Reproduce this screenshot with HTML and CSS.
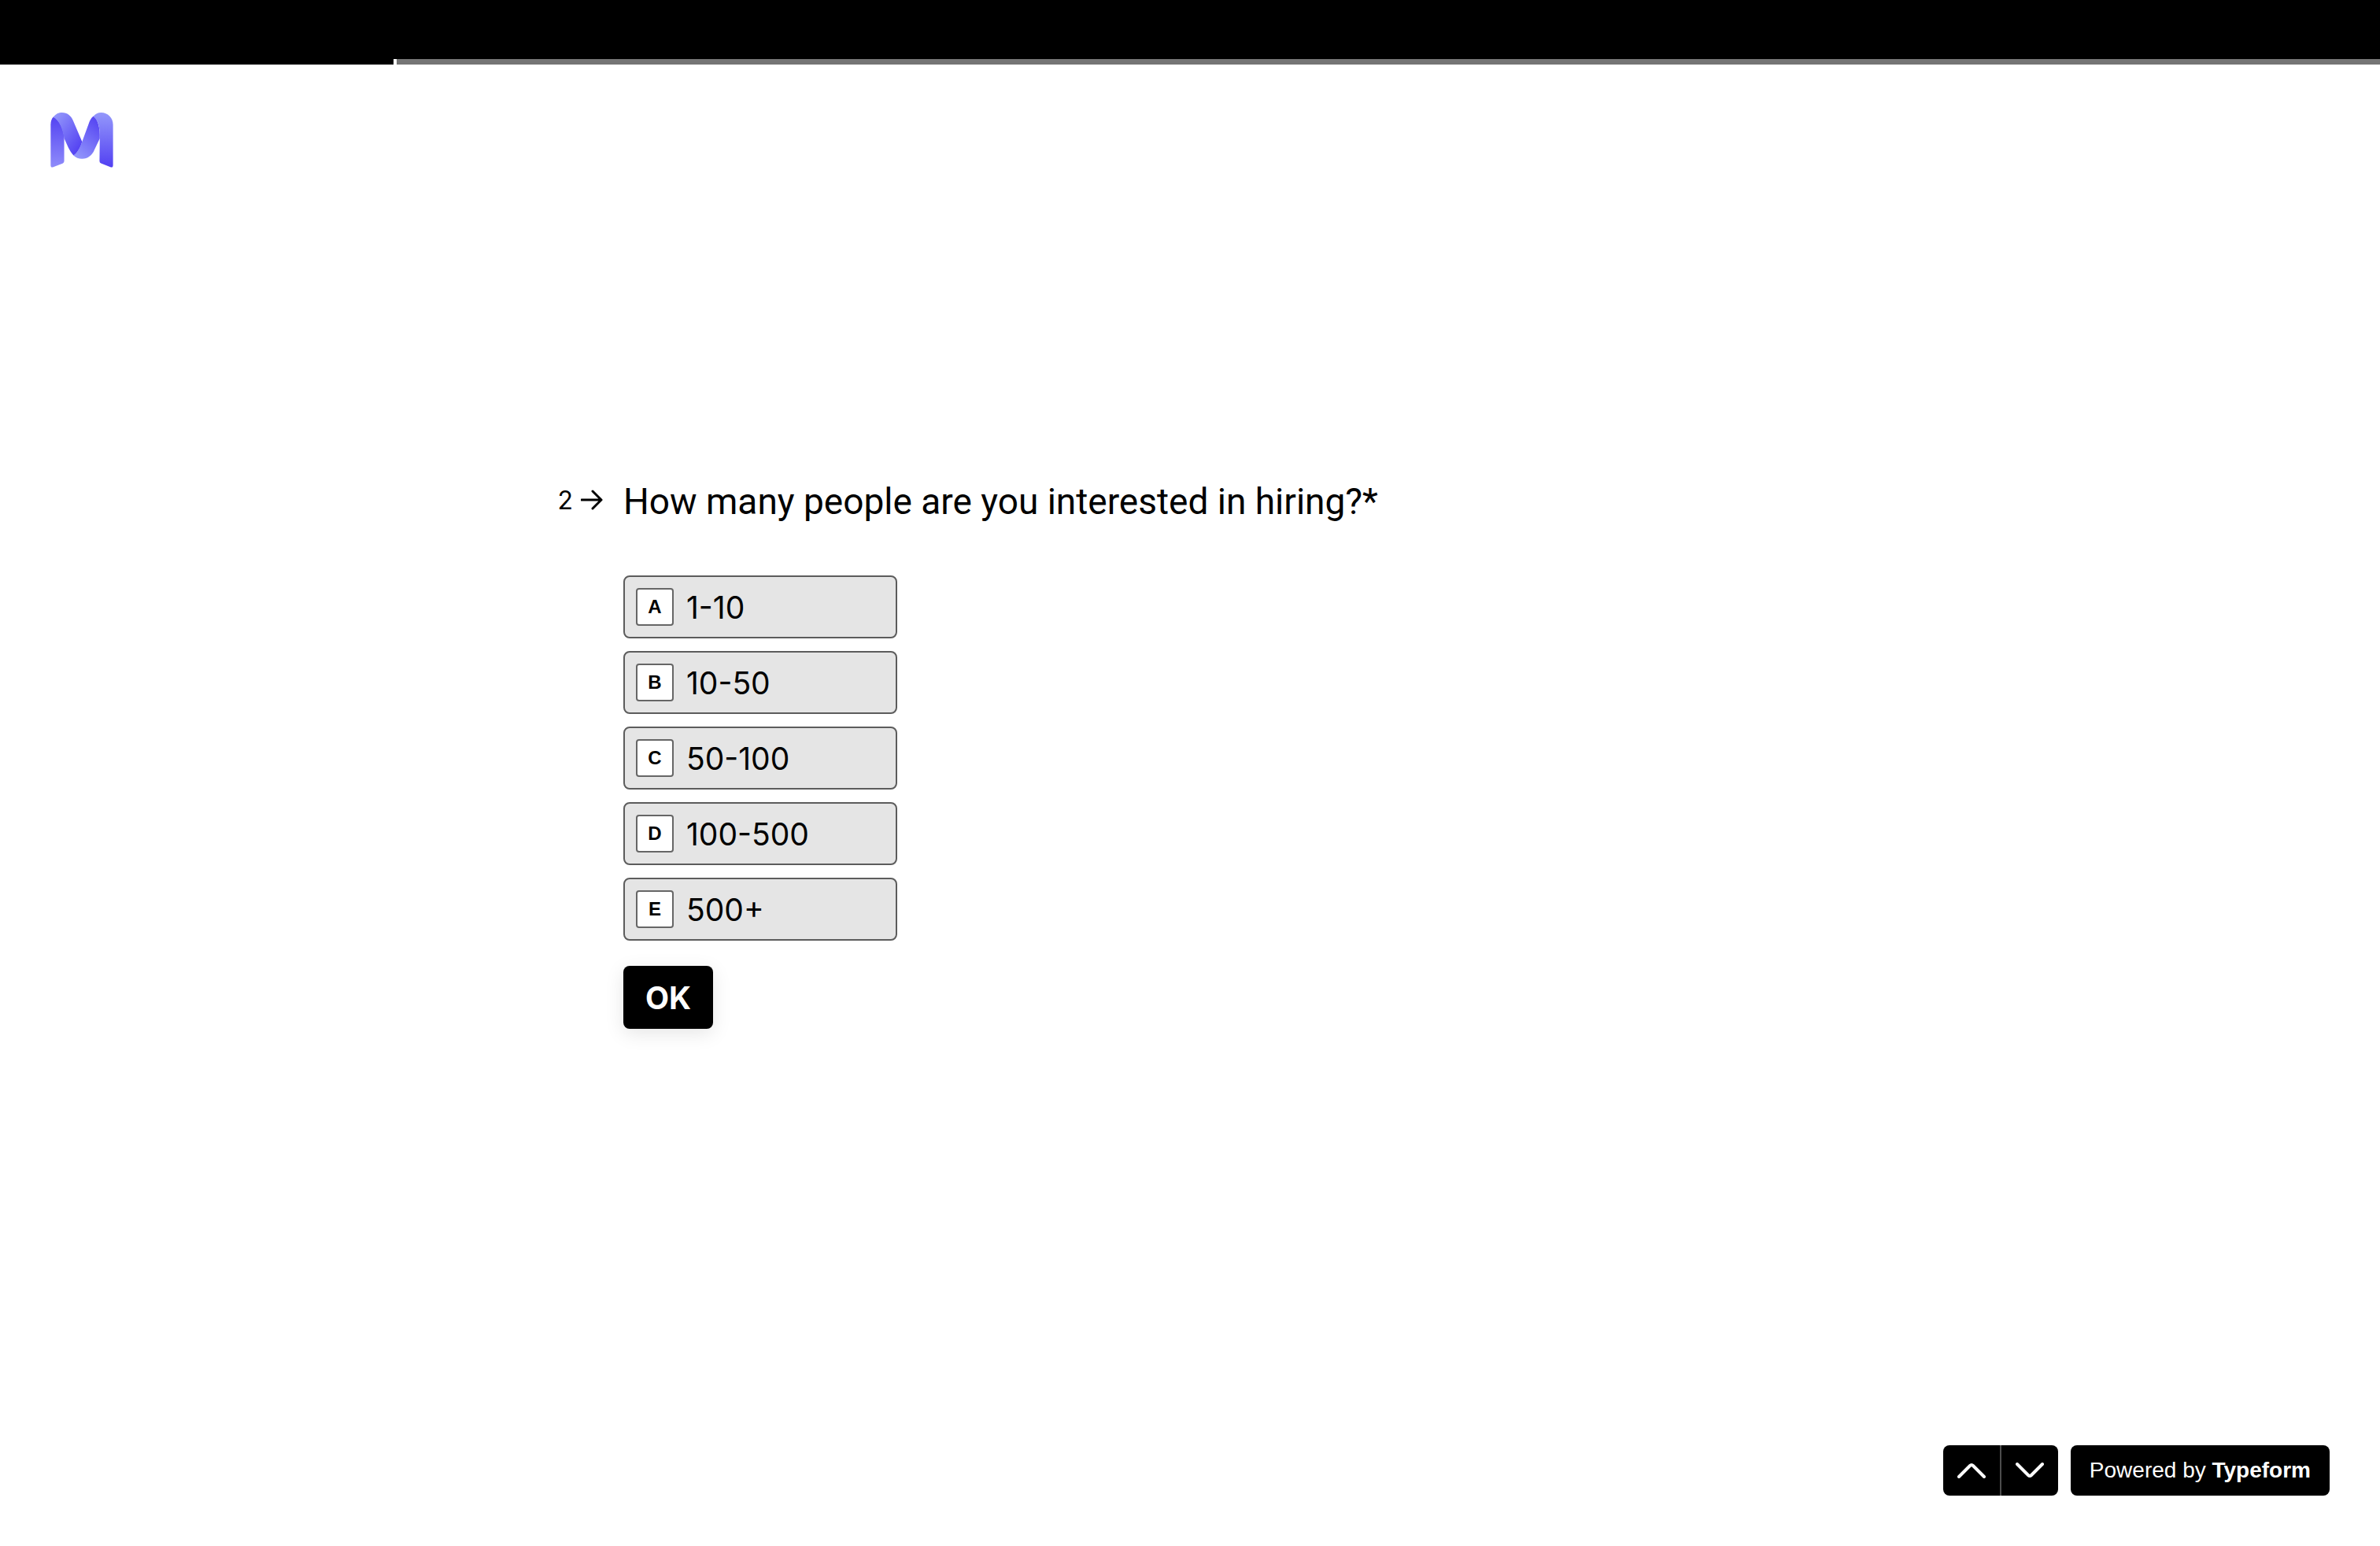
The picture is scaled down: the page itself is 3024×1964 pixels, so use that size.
FILE: index.html
```html
<!DOCTYPE html>
<html lang="en">
<head>
<meta charset="utf-8">
<meta name="viewport" content="width=device-width, initial-scale=1">
<title>Hiring survey</title>
<link rel="stylesheet" href="styles.css">
</head>
<body>
<div class="topbar"></div>
<div class="progress" role="progressbar" aria-label="Survey progress" aria-valuenow="17" aria-valuemin="0" aria-valuemax="100">
  <div class="progress-fill" style="width: 16.667%"></div>
</div>
<header class="header">
  <svg class="logo" viewBox="72 68 240 212" role="img" aria-label="Company logo">
    <defs>
      <linearGradient id="leg-left" x1="0" y1="0" x2="0" y2="1"><stop offset="0" stop-color="#5443f2"/><stop offset="1" stop-color="#8f8cfa"/></linearGradient>
      <linearGradient id="fold-left" x1="0.1" y1="0" x2="0.9" y2="0.9"><stop offset="0" stop-color="#9498fb"/><stop offset="1" stop-color="#5240f2"/></linearGradient>
      <linearGradient id="fold-right" x1="0.8" y1="0" x2="0.3" y2="1"><stop offset="0" stop-color="#5443f2"/><stop offset="1" stop-color="#9093fb"/></linearGradient>
      <linearGradient id="leg-right" x1="0" y1="0" x2="0" y2="1"><stop offset="0" stop-color="#9498fb"/><stop offset="1" stop-color="#5240f2"/></linearGradient>
    </defs>
    <path fill="url(#leg-left)" d="M72 114C72 102 76 91 83 84C107 96 124 140 124 167V254Q124 260 119 263L82 278Q72 281 72 270Z"/>
    <path fill="url(#fold-left)" d="M82 86C91 73 103 68 116 68C136 68 150 80 158 98L193 180C187 202 176 224 160 233C150 222 145 212 140 203L124 167C119 132 105 96 82 86Z"/>
    <path fill="url(#fold-right)" d="M160 233C176 222 186 200 193 180L218 112C222 100 228 88 237 82C254 94 263 130 261 168L240 212C232 232 215 246 193 246C180 246 168 241 160 233Z"/>
    <path fill="url(#leg-right)" d="M236 83C244 73 254 68 266 68C292 68 312 88 312 115V270Q312 281 302 278L266 263Q260 261 260 255L261 168C262 130 257 98 236 83Z"/>
  </svg>
</header>
<main class="main">
  <form class="question">
    <div class="number">
      <span>2</span>
      <svg class="arrow" viewBox="0 0 28 26" aria-hidden="true"><path d="M1 13H26M15 2L26 13L15 24"/></svg>
    </div>
    <div class="content">
      <h1 class="title" id="question-title">How many people are you interested in hiring?*</h1>
      <div class="options" role="radiogroup" aria-labelledby="question-title">
        <label class="option"><input type="radio" name="hires" value="1-10"><span class="key">A</span><span>1-10</span></label>
        <label class="option"><input type="radio" name="hires" value="10-50"><span class="key">B</span><span>10-50</span></label>
        <label class="option"><input type="radio" name="hires" value="50-100"><span class="key">C</span><span>50-100</span></label>
        <label class="option"><input type="radio" name="hires" value="100-500"><span class="key">D</span><span>100-500</span></label>
        <label class="option"><input type="radio" name="hires" value="500+"><span class="key">E</span><span>500+</span></label>
      </div>
      <button class="ok" type="button">OK</button>
    </div>
  </form>
</main>
<footer class="footer">
  <div class="nav">
    <button class="nav-button" type="button" aria-label="Previous question"><svg class="chevron" viewBox="0 0 36 20" aria-hidden="true"><path d="M2 18L16 4Q18 2 20 4L34 18"/></svg></button>
    <button class="nav-button" type="button" aria-label="Next question"><svg class="chevron" viewBox="0 0 36 20" aria-hidden="true"><path d="M2 2L16 16Q18 18 20 16L34 2"/></svg></button>
  </div>
  <a class="powered" href="#">Powered by <strong>Typeform</strong></a>
</footer>
</body>
</html>
```
FILE: styles.css
```css
* {
  box-sizing: border-box;
}

body {
  display: flex;
  flex-direction: column;
  min-height: 100vh;
  margin: 0;
  background: #fff;
  color: #000;
  font-family: Inter, "Liberation Sans", sans-serif;
}

button {
  border: 0;
  background: #000;
  color: #fff;
  font: inherit;
}

.topbar {
  height: 75px;
  background: #000;
}

.progress {
  height: 7px;
  background: #757575;
}

.progress-fill {
  height: 100%;
  border-right: 4px solid #fff;
  background: #000;
}

.header {
  padding: 61px 64px 0;
}

.logo {
  display: block;
  width: 80px;
  height: 70px;
}

.main {
  padding-top: 392px;
}

.question {
  display: grid;
  grid-template-columns: 1fr minmax(0, 1440px) 1fr;
}

.number {
  display: flex;
  align-items: center;
  justify-self: end;
  gap: 10px;
  height: 60px;
  padding-right: 26px;
  font-size: 32px;
}

.arrow {
  width: 28px;
  height: 26px;
  fill: none;
  stroke: #000;
  stroke-width: 3;
  stroke-linecap: round;
  stroke-linejoin: round;
}

.title {
  margin: 0;
  font-family: Roboto, "Liberation Sans", sans-serif;
  font-size: 46px;
  font-weight: 400;
  line-height: 64px;
}

.options {
  display: flex;
  flex-direction: column;
  align-items: flex-start;
  gap: 16px;
  margin: 62px 0 32px;
}

.option {
  position: relative;
  display: flex;
  align-items: center;
  gap: 16px;
  width: 348px;
  height: 80px;
  padding: 0 14px;
  border: 2px solid #5c5c5c;
  border-radius: 8px;
  background: #e5e5e5;
  font-size: 39px;
}

.option input {
  position: absolute;
  inset: 0;
  margin: 0;
  opacity: 0;
}

.key {
  display: grid;
  place-items: center;
  width: 48px;
  height: 48px;
  border: 2px solid #666;
  border-radius: 4px;
  background: #fff;
  font: 700 24px "Liberation Sans", sans-serif;
}

.ok {
  height: 80px;
  padding: 0 28px;
  border-radius: 8px;
  box-shadow: 0 6px 24px rgba(0, 0, 0, 0.1);
  font-size: 39px;
  font-weight: 700;
}

.footer {
  display: flex;
  justify-content: flex-end;
  gap: 16px;
  margin-top: auto;
  padding: 64px;
}

.nav {
  display: flex;
  overflow: hidden;
  border-radius: 8px;
}

.nav-button {
  display: grid;
  place-items: center;
  width: 72px;
  height: 64px;
  padding: 0;
}

.nav-button + .nav-button {
  width: 74px;
  border-left: 2px solid #4d4d4d;
}

.chevron {
  width: 36px;
  height: 20px;
  fill: none;
  stroke: #fff;
  stroke-width: 4;
  stroke-linecap: round;
}

.powered {
  padding: 0 24px;
  border-radius: 8px;
  background: #000;
  color: #fff;
  font: 400 28px/64px "Liberation Sans", sans-serif;
  text-decoration: none;
}
```
